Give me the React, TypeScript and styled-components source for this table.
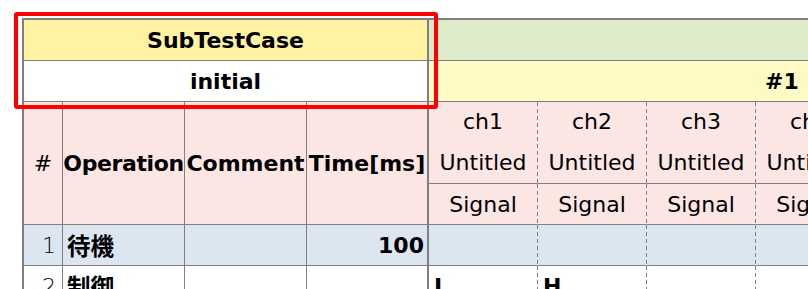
import { FC } from "react";
import styled, { createGlobalStyle } from "styled-components";

const GRID = "#7f7f7f";

const GlobalStyle = createGlobalStyle`
    html, body {
        margin:0;
        padding:0;
        background:#ffffff;
        overflow:hidden;
    }
    body {
        font-family:"DejaVu Sans","Noto Sans CJK JP",sans-serif;
        color:#000000;
    }
`

type Align = "left" | "center" | "right";
type Edge = "solid" | "thick" | "dashed" | "none";

const channels = ["ch1", "ch2", "ch3", "ch4"];

const Cell: FC<{
    bg?: string;
    span?: number;
    rows?: number;
    align?: Align;
    bold?: boolean;
    edge?: Edge;
    pad?: number;
    children?: React.ReactNode;
}> = ({ bg = "#ffffff", span = 1, rows = 1, align = "center", bold = false, edge = "solid", pad = 4, children }) => (
    <SCell
        $bg={bg}
        $span={span}
        $rows={rows}
        $align={align}
        $bold={bold}
        $edge={edge}
        $pad={pad}
    >
        {children}
    </SCell>
);

export default function App() {
    return (
        <>
        <GlobalStyle />
        <SFrame>
            <SSheet>
                {/* 見出し */}
                <Cell bg="#fff2a0" span={4} bold edge="thick">SubTestCase</Cell>
                <Cell bg="#deebca" span={4} edge="none" />
                <Cell span={4} bold edge="thick">initial</Cell>
                <Cell bg="#fff9c6" span={4} bold edge="none" align="left" pad={336}>#1 Pattern</Cell>

                {/* 列ヘッダ */}
                <Cell bg="#fbe6e3" rows={3}>#</Cell>
                <Cell bg="#fbe6e3" rows={3} bold><STight>Operation</STight></Cell>
                <Cell bg="#fbe6e3" rows={3} bold>Comment</Cell>
                <Cell bg="#fbe6e3" rows={3} bold edge="thick">Time[ms]</Cell>
                {channels.map((ch) => (
                    <Cell key={ch} bg="#fbe6e3" rows={2} edge="dashed">
                        <SStack>
                            <span>{ch}</span>
                            <span>Untitled</span>
                        </SStack>
                    </Cell>
                ))}
                {channels.map((ch) => (
                    <Cell key={ch + "_sig"} bg="#fbe6e3" edge="dashed">Signal</Cell>
                ))}

                {/* ステップ */}
                <Cell bg="#dce6f1" align="right" pad={6}><SNum>1</SNum></Cell>
                <Cell bg="#dce6f1" align="left" bold><SKanji>待機</SKanji></Cell>
                <Cell bg="#dce6f1" />
                <Cell bg="#dce6f1" align="right" bold edge="thick" pad={3}>100</Cell>
                {channels.map((ch) => (
                    <Cell key={ch + "_1"} bg="#dce6f1" edge="dashed" />
                ))}

                <Cell align="right" pad={6}><SNum>2</SNum></Cell>
                <Cell align="left" bold><SKanji>制御</SKanji></Cell>
                <Cell />
                <Cell edge="thick" />
                <Cell align="left" bold edge="dashed" pad={5}>L</Cell>
                <Cell align="left" bold edge="dashed" pad={5}>H</Cell>
                <Cell edge="dashed" />
                <Cell edge="dashed" />
            </SSheet>
            <SHighlight />
        </SFrame>
        </>
    );
}

const SFrame = styled.div`
    position:relative;
    margin:18px 0 0 22px;
    width:max-content;
`

const SSheet = styled.div`
    display:grid;
    grid-template-columns:39px 122px 122px 122px repeat(4,109px);
    grid-auto-rows:41px;
    border-left:2px solid ${GRID};
    border-top:2px solid ${GRID};
    font-size:22px;
`

const rightEdge = (edge: Edge) => {
    switch (edge) {
        case "thick":
            return `border-right:2px solid ${GRID};`;
        case "solid":
            return `border-right:1px solid ${GRID};`;
        case "dashed":
            return `
                border-right:1px solid transparent;
                background-image:repeating-linear-gradient(to bottom, ${GRID} 0 4px, transparent 4px 7px);
                background-size:1px 100%;
                background-position:right top;
                background-repeat:no-repeat;
                background-origin:border-box;
            `;
        default:
            return "";
    }
};

const SCell = styled.div<{
    $bg: string;
    $span: number;
    $rows: number;
    $align: Align;
    $bold: boolean;
    $edge: Edge;
    $pad: number;
}>`
    box-sizing:border-box;
    grid-column:span ${({ $span }) => $span};
    grid-row:span ${({ $rows }) => $rows};
    display:flex;
    align-items:center;
    justify-content:${({ $align }) =>
        $align === "left" ? "flex-start" : $align === "right" ? "flex-end" : "center"};
    padding:0 ${({ $align, $pad }) => ($align === "right" ? `${$pad}px` : "0")} 0 ${({ $align, $pad }) => ($align === "left" ? `${$pad}px` : "0")};
    background-color:${({ $bg }) => $bg};
    border-bottom:1px solid ${GRID};
    font-weight:${({ $bold }) => ($bold ? 700 : 400)};
    white-space:nowrap;
    overflow:hidden;
    ${({ $edge }) => rightEdge($edge)}
`

const STight = styled.span`
    letter-spacing:-0.4px;
`

const SKanji = styled.span`
    font-size:23.5px;
`

const SStack = styled.div`
    display:flex;
    flex-direction:column;
    align-items:center;
    gap:7px;
    line-height:34px;
`

const SNum = styled.span`
    font-weight:300;
`

const SHighlight = styled.span`
    position:absolute;
    left:-8px;
    top:-6px;
    width:424px;
    height:97px;
    box-sizing:border-box;
    border:4px solid #ff0000;
    border-radius:3px;
    pointer-events:none;
`
